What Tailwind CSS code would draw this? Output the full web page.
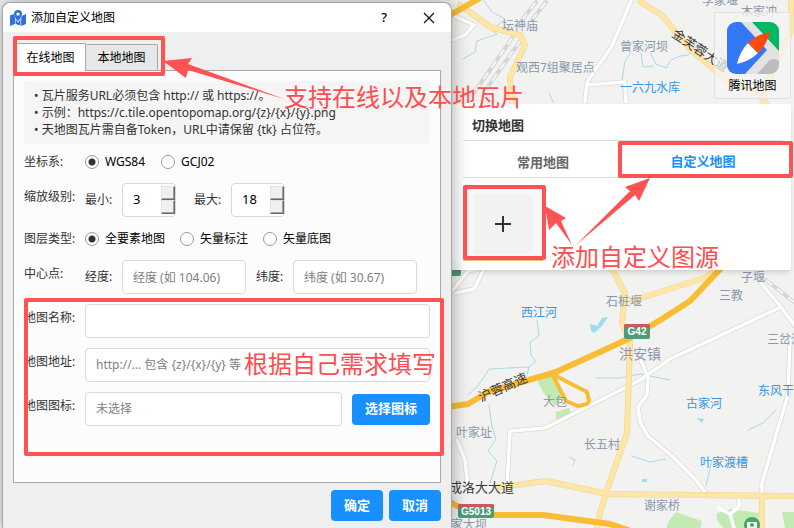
<!DOCTYPE html>
<html lang="zh-CN">
<head>
    <meta charset="UTF-8">
    <meta name="viewport" content="width=device-width, initial-scale=1.0">
    <title>添加自定义地图</title>
    <script src="https://cdn.jsdelivr.net/npm/@tailwindcss/browser@4"></script>
    <style>
        body {
            font-family: "Noto Sans", "Noto Sans CJK SC", sans-serif;
        }
    </style>
</head>
<body class="relative min-h-screen overflow-hidden bg-[#f2f2f0] text-xs text-[#333]">

    <!-- Base map -->
    <svg class="absolute inset-0 w-full h-full" viewBox="0 0 794 528" preserveAspectRatio="xMinYMin slice" fill="none" stroke-linecap="round" stroke-linejoin="round" aria-hidden="true">
        <rect width="794" height="528" fill="#f2f2f0"/>
        <!-- parks -->
        <g fill="#c3eab3">
            <path d="M538 377l12-4 4 10 9 14-8 9-10-11-7-12z"/>
            <path d="M556 412l13-4 2 5-7 5-8 3z"/>
            <path d="M668 522l8-10 14 5 12 4-2 9h-34z"/>
            <path d="M717 513l14-4 28 4-2 17h-32l-8-10z"/>
            <path d="M782 512h12v16h-9z"/>
        </g>
        <!-- water -->
        <g stroke="#a9d8ea" stroke-width="1">
            <path d="M484 1l8 11 13 7-13 11 5 4-20 7-2 11-12 7"/>
            <path d="M650 52l6 12 10 4 5-8 9-4 8-1 9-10"/>
            <path d="M631 52l-6 9-3 20 2 16"/>
            <path d="M641 53l2 14 10-1"/>
            <path d="M549 93l4 9"/>
            <path d="M537 320l2 16-9 6 1 13 5 6-7 6-2 8M529 367l-40 2-11 17-10 9M489 405l3 22 4 12-8 12 9 10-7 22"/>
            <path d="M596 378h24l20-4 30 6"/>
            <path d="M748 430l15-7 13-13M712 460l-6 26M632 456l18 6 16-3M569 457l6 3-2 5"/>
            <path d="M714 45l9 8 6 11"/>
        </g>
        <g fill="#9edcf0">
            <path d="M590 324l7 2 5-8 6-1-6 9-8 7-3-2zM697 418l7 1-2 4zM642 479h5v3h-5z"/>
        </g>
        <!-- railways -->
        <g stroke="#d5d5d8" stroke-width="4">
            <path d="M512 38l-38 55M521 40l-34 48M522 20l14-18M532 20l14-18M766 280l28 22"/>
        </g>
        <g stroke="#f6f6f5" stroke-width="2" stroke-dasharray="8 6" stroke-linecap="butt">
            <path d="M512 38l-38 55M521 40l-34 48M522 20l14-18M532 20l14-18M766 280l28 22"/>
        </g>
        <!-- minor roads, grey casing below white -->
        <g stroke="#dadadb" stroke-width="5">
            <path d="M631 1l-19 45-25 36-2 20M587 85l38-3 1 20M452 15l22 10-9 10-13 5"/>
            <path d="M507 487l3-56 35-3 40-20 55-28 30-21 111-52M761 283l20 24 13 18"/>
            <path d="M641 360l7 18-1 17-9 12 2 15 8 14 24 20 24 24 9 12M790 340l-2 55-12 40-14 48v14M739 497v10"/>
            <path d="M457 440l8 20 3 28M453 290l15-19 17-4-11 22-18 4"/>
        </g>
        <g stroke="#fff" stroke-width="3.5">
            <path d="M631 1l-19 45-25 36-2 20M587 85l38-3 1 20M452 15l22 10-9 10-13 5"/>
            <path d="M507 487l3-56 35-3 40-20 55-28 30-21 111-52M761 283l20 24 13 18"/>
            <path d="M641 360l7 18-1 17-9 12 2 15 8 14 24 20 24 24 9 12M790 340l-2 55-12 40-14 48v14M739 497v10M718 508l12 6 4 14M730 514l9-7"/>
            <path d="M457 440l8 20 3 28M453 290l15-19 17-4-11 22-18 4"/>
        </g>
        <!-- main roads -->
        <g stroke="#f2d48c" stroke-width="6">
            <path d="M610 265l15 28-3 30 8 20-3 90-19 54-8 26-4 20M632 301l72-23 22-13M500 487l46-6 62 13 186 2M762 497v31"/>
            <path d="M460 5l30 22 30 8 5 10-15 32 2 25M641 2l22 14 14 18 14 16 36 30 32 14 8 12M791 1v30l-27 60v14"/>
        </g>
        <g stroke="#fde6a8" stroke-width="5">
            <path d="M610 265l15 28-3 30 8 20-3 90-19 54-8 26-4 20M632 301l72-23 22-13M500 487l46-6 62 13 186 2M762 497v31"/>
            <path d="M460 5l30 22 30 8 5 10-15 32 2 25M641 2l22 14 14 18 14 16 36 30 32 14 8 12M791 1v30l-27 60v14"/>
        </g>
        <!-- highways -->
        <g stroke="#f9bc33" stroke-width="6">
            <path d="M440 408l28-4 20-12 68-20 44-20 30-14 32-19 28-18 34-36 10-4M440 496l17 10 38 9h48l67 9 24 8M440 20l12-6 28-16"/>
            <path d="M552 374l35 18 2 9-2 3-9 2-12-5z" stroke-width="4"/>
        </g>
        <rect x="450" y="262" width="11" height="14" rx="2" fill="#4d9c78"/>
        <g stroke="none">
            <rect x="624" y="324" width="26" height="15" rx="2" fill="#4d9c78"/>
            <path d="M624 328v-2q0-2 2-2h22q2 0 2 2v2z" fill="#cc5a5a"/>
            <rect x="458" y="504" width="36" height="14" rx="2" fill="#4d9c78"/>
            <path d="M458 507v-1q0-2 2-2h32q2 0 2 2v1z" fill="#cc5a5a"/>
            <circle cx="752" cy="525" r="8" fill="#43a866"/>
            <rect x="747" y="522" width="10" height="7" rx="1" fill="#fff"/>
            <circle cx="752" cy="525" r="2" fill="#43a866"/>
        </g>
        <g fill="#fff" font-family="Liberation Sans, sans-serif" font-size="10" font-weight="700" text-anchor="middle">
            <text x="637" y="335">G42</text>
            <text x="476" y="515">G5013</text>
        </g>
        <!-- place names -->
        <g fill="#8b97ab" font-size="12">
            <text x="502" y="30">坛神庙</text>
            <text x="516" y="72">观西7组聚居点</text>
            <text x="620" y="51">曾家河坝</text>
            <text x="741" y="16">木家冲</text>
            <text x="702" y="5">李家堰</text>
            <text x="606" y="306">石桩堰</text>
            <text x="741" y="282">子堰</text>
            <text x="719" y="300">三教</text>
            <text x="767" y="344">三岔沟</text>
            <text x="619" y="359" font-size="14">洪安镇</text>
            <text x="543" y="406">大包</text>
            <text x="456" y="437">叶家址</text>
            <text x="584" y="449">长五村</text>
            <text x="644" y="510">谢家桥</text>
            <text x="439" y="529">任家大坝</text>
        </g>
        <g fill="#3498e5" font-size="12">
            <text x="620" y="92">一六九水库</text>
            <text x="521" y="317">西江河</text>
            <text x="686" y="408">古家河</text>
            <text x="758" y="395">东风干渠</text>
            <text x="700" y="467">叶家渡槽</text>
        </g>
        <g fill="#3b3636" font-size="13">
            <text x="449" y="492">成洛大大道</text>
            <text x="481" y="402" transform="rotate(-24 481 402)">沪蓉高速</text>
            <text x="671" y="36" transform="rotate(34 671 36)">金芙蓉大道</text>
        </g>
    </svg>

    <div class="relative flex min-h-screen">

        <!-- Add map dialog -->
        <section class="z-10 ml-0.5 mt-0.5 w-[450px] shrink-0 flex flex-col rounded-t-lg border border-b-0 border-[#a5a5a5] bg-[#efefef] shadow-[0_0_18px_rgba(0,0,0,0.35)]" aria-labelledby="dialogTitle">
            <header class="flex h-[29px] items-center rounded-t-lg bg-white pl-[7px] pr-4 text-black">
                <svg class="mr-[5px] size-4" viewBox="0 0 16 16" aria-hidden="true">
                    <path fill="#2f6fe0" d="M0 5.500l3.500-1.500L5 7.500V14L0 16zM5.600 9l2 3.200h1L10.500 9v6.500L5.600 14zM11.200 7.500L12.500 5.500 16 4v10l-4.800 2z"/>
                    <path fill="#2f6fe0" fill-rule="evenodd" d="M8 0a4 4 0 0 1 4 4c0 2.500-2.500 5.500-4 7.500C6.500 9.500 4 6.500 4 4a4 4 0 0 1 4-4zm0 2.400a1.700 1.700 0 1 0 0 3.400 1.700 1.700 0 0 0 0-3.400z"/>
                </svg>
                <h1 id="dialogTitle" class="flex-1">添加自定义地图</h1>
                <button type="button" class="mr-9 text-[13px] font-medium" aria-label="帮助">?</button>
                <button type="button" aria-label="关闭">
                    <svg class="size-3" viewBox="0 0 12 12" stroke="#111" stroke-width="1.200" aria-hidden="true"><path d="M1 1l10 10M11 1L1 11"/></svg>
                </button>
            </header>

            <div class="flex items-end pl-3 pt-[11px]" role="tablist">
                <button type="button" role="tab" aria-selected="true" class="z-10 -mb-px h-7 w-[71px] rounded-t-xs border border-b-0 border-[#a8a8a8] bg-white text-black">在线地图</button>
                <button type="button" role="tab" aria-selected="false" class="h-[26px] w-[72px] rounded-t-xs border border-b-0 border-l-0 border-[#a8a8a8] bg-[#e7e7e7] text-black">本地地图</button>
            </div>

            <form class="mx-[10px] flex h-[413px] flex-col gap-[10px] border border-[#a8a8a8] bg-[#fcfcfc] p-[10px]">
                <ul class="rounded bg-[#f5f5f5] px-[10px] py-1.5 leading-[17px]">
                    <li>• 瓦片服务URL必须包含 http:// 或 https://。</li>
                    <li>• 示例：https://c.tile.opentopomap.org/{z}/{x}/{y}.png</li>
                    <li>• 天地图瓦片需自备Token，URL中请保留 {tk} 占位符。</li>
                </ul>

                <div role="radiogroup" aria-label="坐标系" class="flex h-[19px] items-start leading-4">
                    <span class="w-[61px]">坐标系:</span>
                    <label class="mr-4 flex items-center gap-1.5 text-black"><input type="radio" name="crs" checked class="size-3.5 appearance-none rounded-full border border-[#999] bg-white checked:bg-[radial-gradient(circle,#333_0_3px,#fff_4px)]">WGS84</label>
                    <label class="flex items-center gap-1.5 text-black"><input type="radio" name="crs" class="size-3.5 appearance-none rounded-full border border-[#999] bg-white checked:bg-[radial-gradient(circle,#333_0_3px,#fff_4px)]">GCJ02</label>
                </div>

                <div role="group" aria-label="缩放级别" class="flex h-[34px] items-center">
                    <span class="w-[61px] self-start pt-1.5">缩放级别:</span>
                    <label for="minZoom" class="w-[37px]">最小:</label>
                    <div class="flex h-[34px] w-[54px] items-center rounded border border-[#d9d9d9] bg-white">
                        <input id="minZoom" type="text" inputmode="numeric" value="3" class="w-[38px] pl-[10px] text-[13px] text-black outline-none">
                        <div class="flex flex-col">
                            <button type="button" aria-label="增大最小级别" class="h-3.5 w-3.5 border border-b-[#696969] border-r-[#696969] border-l-[#e3e3e3] border-t-[#e3e3e3] bg-[#f0f0f0] shadow-[inset_-1px_-1px_0_#a0a0a0]"></button>
                            <button type="button" aria-label="减小最小级别" class="h-3.5 w-3.5 border border-b-[#696969] border-r-[#696969] border-l-[#e3e3e3] border-t-[#e3e3e3] bg-[#f0f0f0] shadow-[inset_-1px_-1px_0_#a0a0a0]"></button>
                        </div>
                    </div>
                    <label for="maxZoom" class="ml-[18px] w-[37px]">最大:</label>
                    <div class="flex h-[34px] w-[54px] items-center rounded border border-[#d9d9d9] bg-white">
                        <input id="maxZoom" type="text" inputmode="numeric" value="18" class="w-[38px] pl-[10px] text-[13px] text-black outline-none">
                        <div class="flex flex-col">
                            <button type="button" aria-label="增大最大级别" class="h-3.5 w-3.5 border border-b-[#696969] border-r-[#696969] border-l-[#e3e3e3] border-t-[#e3e3e3] bg-[#f0f0f0] shadow-[inset_-1px_-1px_0_#a0a0a0]"></button>
                            <button type="button" aria-label="减小最大级别" class="h-3.5 w-3.5 border border-b-[#696969] border-r-[#696969] border-l-[#e3e3e3] border-t-[#e3e3e3] bg-[#f0f0f0] shadow-[inset_-1px_-1px_0_#a0a0a0]"></button>
                        </div>
                    </div>
                </div>

                <div role="radiogroup" aria-label="图层类型" class="flex h-[23px] items-center">
                    <span class="w-[61px]">图层类型:</span>
                    <label class="mr-[15px] flex items-center gap-1.5 text-black"><input type="radio" name="layer" checked class="size-3.5 appearance-none rounded-full border border-[#999] bg-white checked:bg-[radial-gradient(circle,#333_0_3px,#fff_4px)]">全要素地图</label>
                    <label class="mr-[15px] flex items-center gap-1.5 text-black"><input type="radio" name="layer" class="size-3.5 appearance-none rounded-full border border-[#999] bg-white checked:bg-[radial-gradient(circle,#333_0_3px,#fff_4px)]">矢量标注</label>
                    <label class="flex items-center gap-1.5 text-black"><input type="radio" name="layer" class="size-3.5 appearance-none rounded-full border border-[#999] bg-white checked:bg-[radial-gradient(circle,#333_0_3px,#fff_4px)]">矢量底图</label>
                </div>

                <div role="group" aria-label="中心点" class="flex h-[34px] items-center">
                    <span class="w-[61px] self-start pt-1.5">中心点:</span>
                    <label for="lng" class="w-[37px]">经度:</label>
                    <input id="lng" type="text" placeholder="经度 (如 104.06)" class="h-[34px] w-[124px] rounded border border-[#d9d9d9] bg-white px-[10px] placeholder:text-[#808080]">
                    <label for="lat" class="ml-[10px] w-[37px]">纬度:</label>
                    <input id="lat" type="text" placeholder="纬度 (如 30.67)" class="h-[34px] w-[124px] rounded border border-[#d9d9d9] bg-white px-[10px] placeholder:text-[#808080]">
                </div>

                <div class="flex h-[34px]">
                    <label for="mapName" class="w-[61px] pt-1.5">地图名称:</label>
                    <input id="mapName" type="text" class="min-w-0 flex-1 rounded border border-[#d9d9d9] bg-white px-[10px]">
                </div>
                <div class="flex h-[34px]">
                    <label for="mapUrl" class="w-[61px] pt-1.5">地图地址:</label>
                    <input id="mapUrl" type="text" placeholder="http://... 包含 {z}/{x}/{y} 等" class="min-w-0 flex-1 rounded border border-[#d9d9d9] bg-white px-[10px] placeholder:text-[#808080]">
                </div>
                <div class="flex h-[34px]">
                    <label for="mapIcon" class="w-[61px] pt-1.5">地图图标:</label>
                    <input id="mapIcon" type="text" placeholder="未选择" class="min-w-0 flex-1 rounded border border-[#d9d9d9] bg-white px-[10px] placeholder:text-[#808080]">
                    <button type="button" class="ml-[10px] h-[31px] w-[78px] self-center rounded bg-[#1890ff] text-[13px] font-bold text-white">选择图标</button>
                </div>
            </form>

            <footer class="flex justify-end gap-1.5 px-[10px] py-[7px]">
                <button type="button" class="h-[31px] w-[52px] rounded bg-[#1890ff] text-[13px] font-bold text-white">确定</button>
                <button type="button" class="h-[31px] w-[52px] rounded bg-[#1890ff] text-[13px] font-bold text-white">取消</button>
            </footer>
        </section>

        <!-- Map switcher -->
        <aside class="flex min-w-0 flex-1 flex-col pr-[3px] pt-3">
            <button type="button" class="flex h-[87px] w-[77px] flex-col items-center self-end rounded-xs border border-[#e2e2e2] bg-[#f5f5f5]/70 pt-[9px] text-black">
                <svg class="size-[52px]" viewBox="0 0 52 52" aria-hidden="true">
                    <clipPath id="logoClip"><rect width="52" height="52" rx="9"/></clipPath>
                    <g clip-path="url(#logoClip)">
                        <rect width="52" height="52" fill="#e2e2e2"/>
                        <path fill="#3478f6" d="M0 0h14l26 28-22 24H0z"/>
                        <path fill="#00b863" d="M25 0h27v29z"/>
                        <path fill="#bcbcbc" d="M52 39v13H30l12-13q5-4 10 0z"/>
                        <path fill="#fff" d="M10 42q3-13 11-21l10 10q-8 8-21 11z"/>
                        <path fill="#ff4a0c" d="M43 10q-14 3-22 11l10 10q8-7 12-21z"/>
                    </g>
                </svg>
                <span class="mt-1">腾讯地图</span>
            </button>

            <section class="mt-[5px] h-[166px] bg-white/95 pl-[11px] pr-2 shadow-md">
                <h2 class="h-[37px] border-b border-[#ddd] pl-[9px] pt-[11px] text-[13px] leading-5 font-bold text-[#333]">切换地图</h2>
                <div class="flex border-b border-[#ddd] text-[13px] font-bold" role="tablist">
                    <button type="button" role="tab" aria-selected="false" class="h-9 flex-1 pt-2 text-[#666]">常用地图</button>
                    <button type="button" role="tab" aria-selected="true" class="h-9 flex-1 pt-1.5 text-[#1890ff]">自定义地图</button>
                </div>
                <button type="button" aria-label="添加地图" class="mt-2 flex h-[75px] w-[80px] border border-[#e0c47c] bg-[#f8f8f8] py-[7px] pl-[9px]">
                    <span class="flex size-[60px] items-center justify-center rounded bg-[#f2f2f2]">
                        <svg class="size-4" viewBox="0 0 16 16" stroke="#333" stroke-width="2" aria-hidden="true"><path d="M8 0v16M0 8h16"/></svg>
                    </span>
                </button>
            </section>
        </aside>
    </div>

    <!-- Callouts drawn over the windows -->
    <svg class="pointer-events-none absolute left-0 top-0 z-20" width="794" height="528" viewBox="0 0 794 528">
        <g fill="none" stroke="#ff5252" stroke-width="4" stroke-linejoin="round">
            <rect x="15" y="38" width="148" height="36"/>
            <rect x="26" y="300" width="416" height="154"/>
            <rect x="620" y="143" width="171" height="33"/>
            <rect x="465" y="187" width="79" height="71"/>
        </g>
        <g fill="#ff5252">
            <path d="M163 61l29-3-4 6 96 35-96-29-2 8z"/>
            <path d="M650 178l-11 23-4-6-59 50 54-54-5-4z"/>
            <path d="M545 206l21 12-5 3 11 24-16-22-7 7z"/>
        </g>
        <g fill="#ff4d4f" font-size="24">
            <text x="284" y="106">支持在线以及本地瓦片</text>
            <text x="551" y="266">添加自定义图源</text>
            <text x="244" y="373">根据自己需求填写</text>
        </g>
    </svg>
</body>
</html>
